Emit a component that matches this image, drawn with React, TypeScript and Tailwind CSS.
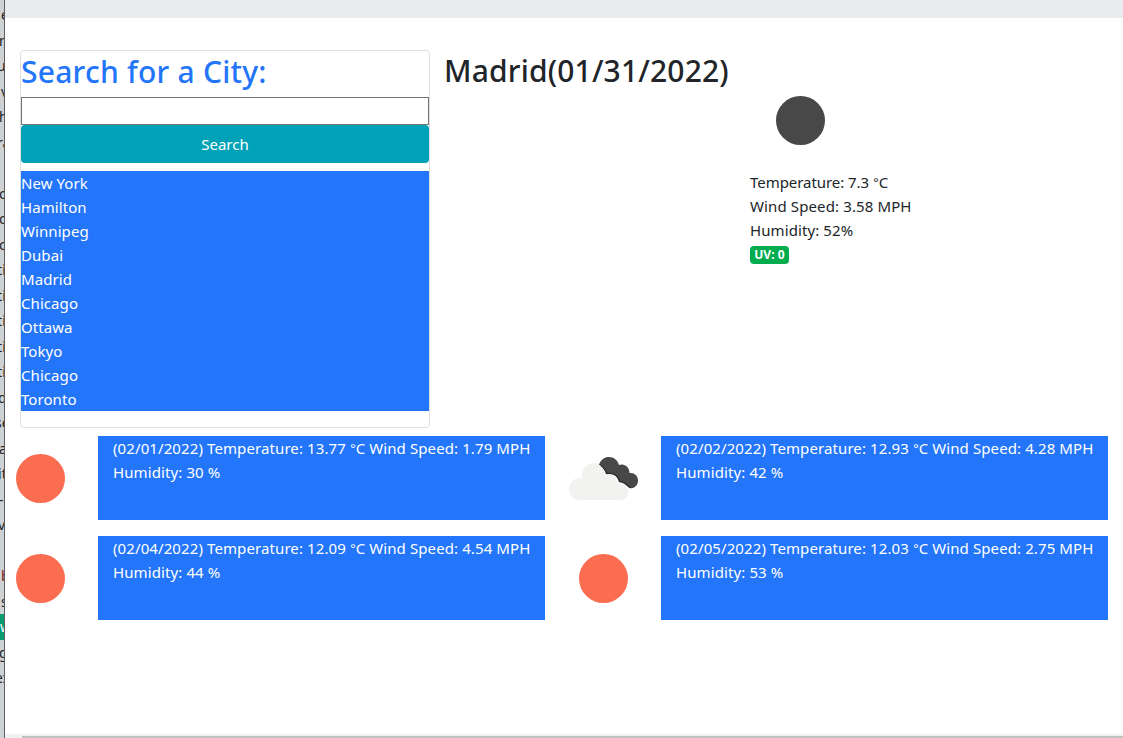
const cities = ['New York', 'Hamilton', 'Winnipeg', 'Dubai', 'Madrid', 'Chicago', 'Ottawa', 'Tokyo', 'Chicago', 'Toronto'];

const editorLines: [string, string][] = [
  ['e', 'ml-px'], ['n', '-ml-px'], ['u', '-ml-[3px]'], ['v', 'ml-px'], ['h', '-ml-px'], ['ra', '-ml-[3px]'], ['', ''],
  ['c', '-ml-px'], ['c', '-ml-px'], ['c', '-ml-px'],
  ['ti', '-ml-[3px]'], ['ti', '-ml-[3px]'], ['ti', '-ml-[3px]'], ['ti', '-ml-[3px]'], ['ti', '-ml-[3px]'],
  ['d', '-ml-[2px]'], ['se', '-ml-[5px]'], ['a', '-ml-px'], ['it', '-ml-[2px]'], ['-s', '-ml-px'], ['v', '-ml-[2px]'], ['', ''],
  ['b', 'ml-px'], ['s', 'ml-px'], ['w', ''], ['g', '-ml-px'], ['ex', '-ml-[5px]'],
];

type Day = { date: string; temp: string; wind: string; humidity: number; icon: 'sun' | 'clouds' };

const days: Day[] = [
  { date: '02/01/2022', temp: '13.77', wind: '1.79', humidity: 30, icon: 'sun' },
  { date: '02/02/2022', temp: '12.93', wind: '4.28', humidity: 42, icon: 'clouds' },
  { date: '02/04/2022', temp: '12.09', wind: '4.54', humidity: 44, icon: 'sun' },
  { date: '02/05/2022', temp: '12.03', wind: '2.75', humidity: 53, icon: 'sun' },
];

function Disc({ fill }: { fill: string }) {
  return (
    <svg width="100" height="100" viewBox="0 0 100 100" className="block shrink-0">
      <circle cx="49.5" cy="50.5" r="24.5" fill={fill} />
    </svg>
  );
}

function Clouds() {
  return (
    <svg width="100" height="100" viewBox="1 0 100 100" className="block shrink-0">
      <path d="M46 36.5C48 31.5 51.5 29 56 29C61 29 64.5 32 66 37C71.5 35 76.5 39 76.5 45C81.5 44.500 85 48 85 52.500C85 57 82 60.300 77.500 60.300C74 56.500 70.500 54 66.500 53.500C65 47.500 61 44.500 53.500 45.500C52 41 50 38.500 46 36.500Z" fill="#484849" />
      <path d="M46 36.500C50 38.500 52 41 53.500 45.500C61 44.500 65 47.500 66.500 53.500C70.500 54 74 56.500 77 59.800" fill="none" stroke="#29292a" strokeWidth="1.300" />
      <path d="M27 72A11 11 0 0 1 27 50H28.800C28 41.500 33 35 40.500 35C46 35 50 38.500 51.500 47C58.500 45 64 49 65 55.500C71 55 75.500 59 75.500 64C75.500 68.500 72 72 67 72Z" fill="#f2f2f1" />
    </svg>
  );
}

function Celsius() {
  return <><span className="font-['Liberation_Sans',sans-serif] leading-none tracking-[-0.3px]">°</span>C</>;
}

export default function App() {
  return (
    <div className="flex h-[738px] w-[1123px] overflow-hidden bg-white font-['Noto_Sans',sans-serif] text-[15px] leading-6 tracking-[0.1px] text-[#212529]">
      <aside className="h-full w-[5px] shrink-0 overflow-hidden border-r border-[#5b5d60] bg-[#cfd2d5] pt-[2px] text-[14px]">
        {editorLines.map(([line, offset], i) => (
          <div key={i} className={`h-[25.5px] whitespace-nowrap leading-[25.5px] ${line === 'w' ? 'bg-[#079b6d] text-white' : line === 'b' ? 'text-[#802020]' : 'text-[#222]'}`}>
            <span className={offset}>{line}</span>
          </div>
        ))}
      </aside>
      <main className="flex h-full min-w-0 flex-1 flex-col">
        <div className="h-[18px] shrink-0 bg-[#e9ecef]" />
        <section className="flex h-[410px] shrink-0 pl-[15px] pt-8">
          <div className="h-[378px] w-[410px] shrink-0 rounded border border-[#dfdfdf]">
            <h2 className="h-[46px] whitespace-nowrap pt-0.5 text-[30px] font-medium leading-[38px] tracking-[0.24px] text-[#2375fa]">Search for a City:</h2>
            <input aria-label="City" className="block h-7 w-full border border-[#767676] bg-white px-1 outline-none" />
            <button className="mb-2 block h-[38px] w-full rounded bg-[#00a2b8] tracking-normal text-white">Search</button>
            <ul className="bg-[#2375fa] tracking-[0.07px] text-white">
              {cities.map((city, i) => <li key={i} className="h-6">{city}</li>)}
            </ul>
          </div>
          <div className="w-[320px] shrink-0 pl-3.5">
            <h2 className="whitespace-nowrap pt-0.5 text-[30px] font-medium leading-[38px] tracking-[0.17px]">Madrid(01/31/2022)</h2>
          </div>
          <div className="mt-5">
            <div className="pl-px"><Disc fill="#484849" /></div>
            <div className="whitespace-nowrap">
              <p className="h-6 tracking-[-0.05px]">Temperature: 7.3 <Celsius /></p>
              <p className="h-6 tracking-[0.12px]">Wind Speed: 3.58 MPH</p>
              <p className="h-6">Humidity: 52%</p>
              <span className="mt-1 flex h-[18px] w-[39px] items-center justify-center rounded bg-[#00ac4e] text-[12px] font-bold leading-none tracking-[0.05px] text-white">UV: 0</span>
            </div>
          </div>
        </section>
        <section className="grid grid-cols-[563px_563px]">
          {days.map((day) => (
            <article key={day.date} className="flex h-[100px]">
              <div className="-ml-[14px] w-[107px] shrink-0">{day.icon === 'sun' ? <Disc fill="#fb6d51" /> : <Clouds />}</div>
              <div className="mt-2 h-[84px] w-[447px] shrink-0 whitespace-nowrap bg-[#2375fa] pl-[15px] text-white">
                <p className="h-6">({day.date}) Temperature: {day.temp} <Celsius /> Wind Speed: {day.wind} MPH</p>
                <p className="h-6">Humidity: {day.humidity} %</p>
              </div>
            </article>
          ))}
        </section>
        <div className="mt-auto h-1 shrink-0 bg-[#f1f1f1] pl-[17px] pt-0.5">
          <div className="h-0.5 bg-[#c1c1c1]" />
        </div>
      </main>
    </div>
  );
}
